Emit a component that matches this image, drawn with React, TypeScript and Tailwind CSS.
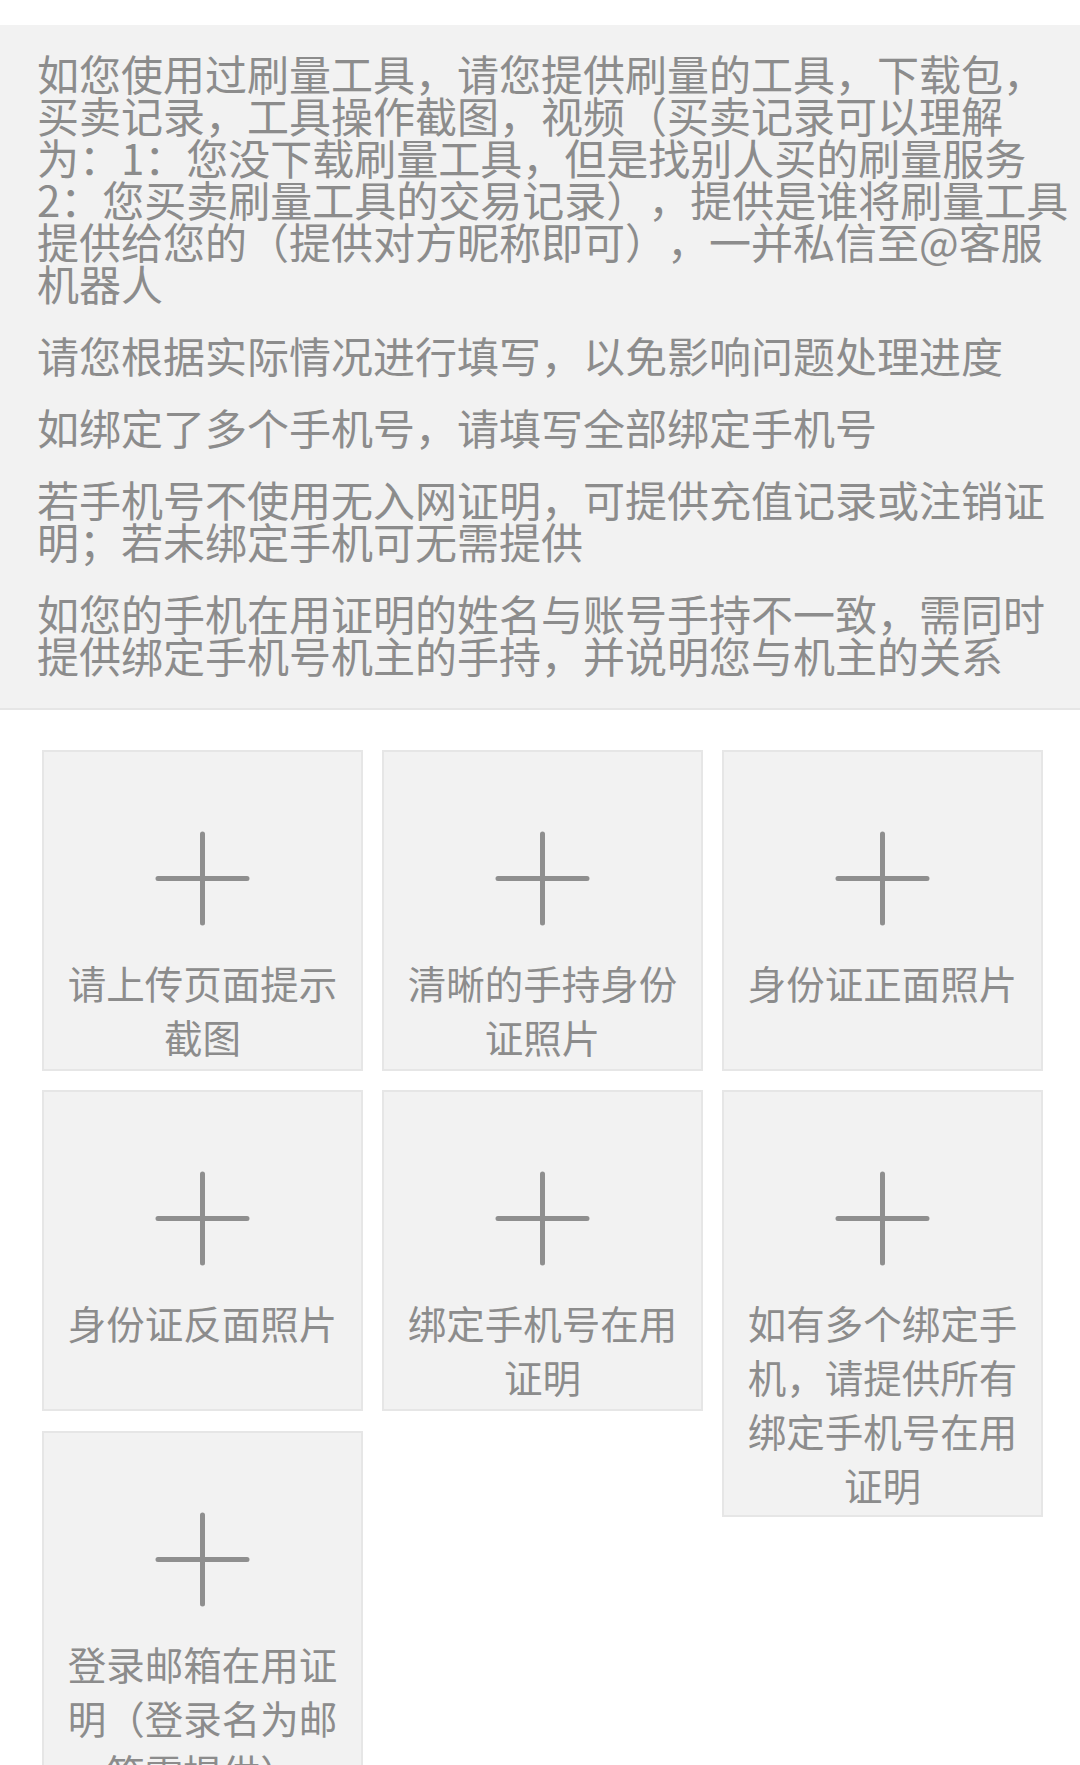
import React from 'react';

const notes = [
  '如您使用过刷量工具，请您提供刷量的工具，下载包，买卖记录，工具操作截图，视频（买卖记录可以理解为：1：您没下载刷量工具，但是找别人买的刷量服务2：您买卖刷量工具的交易记录），提供是谁将刷量工具提供给您的（提供对方昵称即可），一并私信至@客服机器人',
  '请您根据实际情况进行填写，以免影响问题处理进度',
  '如绑定了多个手机号，请填写全部绑定手机号',
  '若手机号不使用无入网证明，可提供充值记录或注销证明；若未绑定手机可无需提供',
  '如您的手机在用证明的姓名与账号手持不一致，需同时提供绑定手机号机主的手持，并说明您与机主的关系',
];

function PlusIcon() {
  return (
    <svg width="95" height="95" viewBox="0 0 95 95" fill="none">
      <path d="M47.5 3v89M3 47.5h89" stroke="#8f8f8f" strokeWidth="5" strokeLinecap="round" />
    </svg>
  );
}

function UploadTile({ label }: { label: string }) {
  return (
    <div className="w-[321px] min-h-[321px] shrink-0 border-2 border-[#e6e6e6] bg-[#f2f2f2] flex flex-col items-center pt-[79px] pb-[4px] px-[16px]">
      <PlusIcon />
      <div className="mt-[29px] text-center text-[38.5px] leading-[54px] text-[#8c8c8c]">{label}</div>
    </div>
  );
}

export default function App() {
  return (
    <div className="w-[1080px] min-h-[1765px] bg-white pt-[25px] font-['Noto_Sans_CJK_SC',sans-serif] [text-spacing-trim:space-all]">
      {/* Tips */}
      <div className="bg-[#f2f2f2] border-b-2 border-[#e6e6e6] pl-[37px] pr-[8px] pt-[27px] pb-[32px] flex flex-col gap-[30px]">
        {notes.map((n, i) => (
          <p key={i} className="text-[42px] leading-[42px] text-[#8c8c8c]">
            {n}
          </p>
        ))}
      </div>

      {/* Upload grid */}
      <div className="pl-[42px] pr-[37px] pt-[40px] flex flex-col gap-[19px]">
        <div className="flex items-start gap-[19px]">
          <UploadTile label="请上传页面提示截图" />
          <UploadTile label="清晰的手持身份证照片" />
          <UploadTile label="身份证正面照片" />
        </div>
        <div className="flex items-start gap-[19px]">
          <div className="flex flex-col gap-[20px]">
            <div className="flex items-start gap-[19px]">
              <UploadTile label="身份证反面照片" />
              <UploadTile label="绑定手机号在用证明" />
            </div>
            <UploadTile label="登录邮箱在用证明（登录名为邮箱需提供）" />
          </div>
          <UploadTile label="如有多个绑定手机，请提供所有绑定手机号在用证明" />
        </div>
      </div>
    </div>
  );
}
